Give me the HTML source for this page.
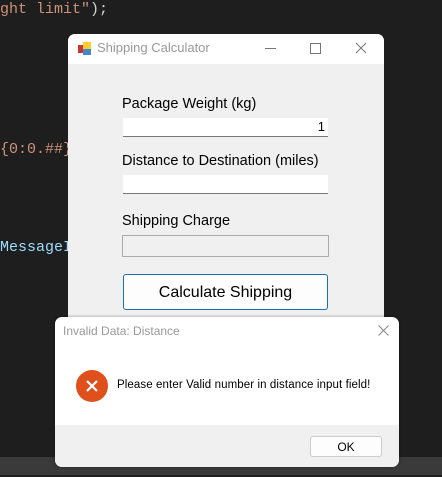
<!DOCTYPE html>
<html><head><style>
body{margin:0;width:442px;height:477px;background:#1e1e1e;position:relative;overflow:hidden;font-family:"Segoe UI","Liberation Sans",sans-serif}
.code{position:absolute;font-family:"Liberation Mono",monospace;font-size:15px;white-space:pre}
.a{position:absolute}
</style></head><body>
<div class="code" style="left:0;top:1px;color:#ce9178">ght limit"<span style="color:#d4d4d4">);</span></div>
<div class="code" style="left:0;top:141px;color:#ce9178">{0:0.##}</div>
<div class="code" style="left:0;top:239px;color:#9cdcfe">MessageI</div>
<div class="a" style="left:0;top:457px;width:442px;height:18px;background:#3a3a3a"></div>

<div class="a" style="left:68px;top:34px;width:316px;height:300px;background:#f0f0f0;border-radius:7px 7px 0 0;overflow:hidden">
 <div class="a" style="left:0;top:0;width:316px;height:30px;background:#fff"></div>
 <svg class="a" style="left:10px;top:8px" width="14" height="14"><rect x="0" y="3" width="6" height="8" fill="#c33"/><rect x="5" y="0" width="8" height="7" fill="#fc3"/><rect x="5" y="7" width="8" height="6" fill="#48c"/></svg>
 <div class="a" style="left:29px;top:6px;font-size:13px;color:#999">Shipping Calculator</div>
 <div class="a" style="left:197px;top:14px;width:11px;height:1px;background:#777"></div>
 <div class="a" style="left:242px;top:9px;width:9px;height:9px;border:1px solid #777"></div>
 <svg class="a" style="left:287px;top:8px" width="12" height="12"><path d="M1 1L11 11M11 1L1 11" stroke="#777" stroke-width="1"/></svg>
 <div class="a" style="left:54px;top:62px;font-size:14.5px;color:#000">Package Weight (kg)</div>
 <div class="a" style="left:55px;top:84px;width:205px;height:18px;background:#fff;border-bottom:1px solid #777;font-size:13px;text-align:right;line-height:18px"><span style="padding-right:3px">1</span></div>
 <div class="a" style="left:54px;top:119px;font-size:14.5px;color:#000">Distance to Destination (miles)</div>
 <div class="a" style="left:55px;top:141px;width:205px;height:18px;background:#fff;border-bottom:1px solid #777"></div>
 <div class="a" style="left:54px;top:179px;font-size:14.5px;color:#000">Shipping Charge</div>
 <div class="a" style="left:54px;top:201px;width:205px;height:20px;border:1px solid #aaa;background:#f0f0f0"></div>
 <div class="a" style="left:55px;top:240px;width:203px;height:34px;border:1px solid #1a6fb5;border-radius:3px;background:#fdfdfd;text-align:center;line-height:36px;font-size:16px;color:#000">Calculate Shipping</div>
</div>

<div class="a" style="left:55px;top:317px;width:344px;height:150px;background:#fff;border-radius:7px;overflow:hidden;box-shadow:0 0 3px rgba(0,0,0,.4)">
 <div class="a" style="left:8px;top:7px;font-size:12px;color:#999">Invalid Data: Distance</div>
 <svg class="a" style="left:323px;top:8px" width="11" height="11"><path d="M0.5 0.5L10.5 10.5M10.5 0.5L0.5 10.5" stroke="#888" stroke-width="1"/></svg>
 <svg class="a" style="left:21px;top:53px" width="32" height="32"><circle cx="16" cy="16" r="16" fill="#e0501c"/><path d="M11 11L21 21M21 11L11 21" stroke="#fff" stroke-width="2.2"/></svg>
 <div class="a" style="left:62px;top:62px;font-size:11.5px;color:#000;letter-spacing:0.1px">Please enter Valid number in distance input field!</div>
 <div class="a" style="left:0;top:108px;width:344px;height:42px;background:#f0f0f0"></div>
 <div class="a" style="left:255px;top:119px;width:70px;height:19px;border:1px solid #ccc;border-radius:3px;background:#fdfdfd;text-align:center;line-height:20px;font-size:12px">OK</div>
</div>
</body></html>
